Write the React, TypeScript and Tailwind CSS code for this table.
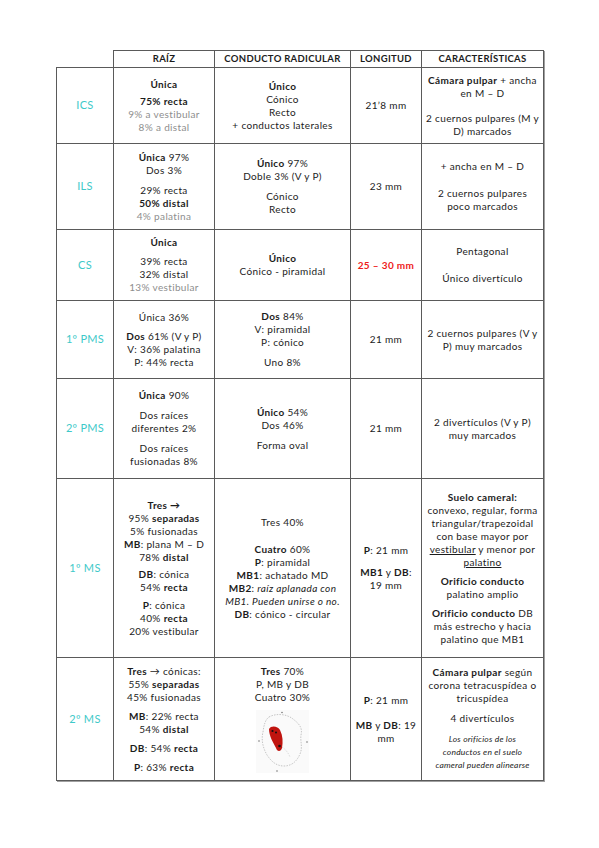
import React from "react";

const FONT = "font-['Lato','Open_Sans',sans-serif]";

const Td = ({ children }: { children?: React.ReactNode }) => (
  <td className="border border-[#5a5a5a] px-[2px] text-center align-middle">
    {children}
  </td>
);

const Label = ({ children }: { children: React.ReactNode }) => (
  <td className="border border-[#5a5a5a] text-center align-middle text-[11px] tracking-[0.3px] text-[#3ec9c9]">
    {children}
  </td>
);

const L = ({
  children,
  className = "",
}: {
  children: React.ReactNode;
  className?: string;
}) => <div className={`whitespace-nowrap leading-[13px] ${className}`}>{children}</div>;

const Gray = ({ children }: { children: React.ReactNode }) => (
  <span className="text-[#8e8e8e]">{children}</span>
);

const ToothSketch = () => (
  <svg width="53" height="63" viewBox="0 0 53 63" className="mx-auto mt-[6px] bg-[#fafafa]">
    <path
      d="M13 7 C20 3 31 4 37 9 C42 13 47 17 45 25 C44 31 47 37 44 44 C41 51 36 56 28 56 C20 56 15 51 11 45 C7 38 5 30 7 22 C8 15 9 10 13 7 Z"
      fill="none"
      stroke="#b8b8b8"
      strokeWidth="0.8"
      strokeDasharray="1.5 1.2"
    />
    <path d="M21 38 C25 34 31 40 34 47" fill="none" stroke="#c8c8c8" strokeWidth="0.6" strokeDasharray="1.5 1.2" />
    <path
      d="M13 19 C15 15 22 16 24 20 C27 26 27 32 26 38 C25 42 21 42 20 38 C17 32 13 26 13 19 Z"
      fill="#c0140f"
    />
    <circle cx="16.5" cy="21" r="1.1" fill="#111" />
    <circle cx="20" cy="22.5" r="1" fill="#111" />
    <circle cx="23.5" cy="36" r="1.3" fill="#111" />
    <circle cx="3" cy="31" r="0.8" fill="#777" />
    <circle cx="51" cy="32" r="0.8" fill="#777" />
    <circle cx="26" cy="2.5" r="0.8" fill="#777" />
    <circle cx="21" cy="61" r="0.8" fill="#777" />
  </svg>
);

const App = () => {
  return (
    <div className={`min-h-[848px] w-[599px] bg-white pl-[56px] pt-[50px] text-[10px] tracking-[0.35px] text-[#1c1c1c] ${FONT}`}>
      <table className="w-[487px] table-fixed border-collapse shadow-[1px_1px_0_0_#a0a0a0]">
        <colgroup>
          <col className="w-[57px]" />
          <col className="w-[101px]" />
          <col className="w-[136px]" />
          <col className="w-[71px]" />
          <col className="w-[122px]" />
        </colgroup>
        <thead>
          <tr className="h-[17px] text-[9.5px] font-bold tracking-[0.3px]">
            <th className="border-0 bg-white"></th>
            <th className="border border-[#5a5a5a] font-bold">RAÍZ</th>
            <th className="border border-[#5a5a5a] font-bold">CONDUCTO RADICULAR</th>
            <th className="border border-[#5a5a5a] font-bold">LONGITUD</th>
            <th className="border border-[#5a5a5a] font-bold">CARACTERÍSTICAS</th>
          </tr>
        </thead>
        <tbody>
          {/* ICS */}
          <tr className="h-[76px]">
            <Label>ICS</Label>
            <Td>
              <L className="font-bold">Única</L>
              <L className="mt-[4px] font-bold">75% recta</L>
              <L><Gray>9% a vestibular</Gray></L>
              <L><Gray>8% a distal</Gray></L>
            </Td>
            <Td>
              <L className="font-bold">Único</L>
              <L>Cónico</L>
              <L>Recto</L>
              <L>+ conductos laterales</L>
            </Td>
            <Td>21’8 mm</Td>
            <Td>
              <L><b>Cámara pulpar</b> + ancha</L>
              <L>en M – D</L>
              <L className="mt-[12px]">2 cuernos pulpares (M y</L>
              <L>D) marcados</L>
            </Td>
          </tr>

          {/* ILS */}
          <tr className="h-[86px]">
            <Label>ILS</Label>
            <Td>
              <L><b>Única</b> 97%</L>
              <L>Dos 3%</L>
              <L className="mt-[7px]">29% recta</L>
              <L className="font-bold">50% distal</L>
              <L><Gray>4% palatina</Gray></L>
            </Td>
            <Td>
              <L><b>Único</b> 97%</L>
              <L>Doble 3% (V y P)</L>
              <L className="mt-[7px]">Cónico</L>
              <L>Recto</L>
            </Td>
            <Td>23 mm</Td>
            <Td>
              <L>+ ancha en M – D</L>
              <L className="mt-[14px]">2 cuernos pulpares</L>
              <L>poco marcados</L>
            </Td>
          </tr>

          {/* CS */}
          <tr className="h-[71px]">
            <Label>CS</Label>
            <Td>
              <L className="font-bold">Única</L>
              <L className="mt-[6px]">39% recta</L>
              <L>32% distal</L>
              <L><Gray>13% vestibular</Gray></L>
            </Td>
            <Td>
              <L className="font-bold">Único</L>
              <L>Cónico - piramidal</L>
            </Td>
            <Td>
              <span className="font-bold text-[#ee1b1b]">25 – 30 mm</span>
            </Td>
            <Td>
              <L>Pentagonal</L>
              <L className="mt-[14px]">Único divertículo</L>
            </Td>
          </tr>

          {/* 1º PMS */}
          <tr className="h-[78px]">
            <Label>1º PMS</Label>
            <Td>
              <L>Única 36%</L>
              <L className="mt-[6px]"><b>Dos</b> 61% (V y P)</L>
              <L>V: 36% palatina</L>
              <L>P: 44% recta</L>
            </Td>
            <Td>
              <L><b>Dos</b> 84%</L>
              <L>V: piramidal</L>
              <L>P: cónico</L>
              <L className="mt-[7px]">Uno 8%</L>
            </Td>
            <Td>21 mm</Td>
            <Td>
              <L>2 cuernos pulpares (V y</L>
              <L>P) muy marcados</L>
            </Td>
          </tr>

          {/* 2º PMS */}
          <tr className="h-[100px]">
            <Label>2º PMS</Label>
            <Td>
              <L><b>Única</b> 90%</L>
              <L className="mt-[7px]">Dos raíces</L>
              <L>diferentes 2%</L>
              <L className="mt-[7px]">Dos raíces</L>
              <L>fusionadas 8%</L>
            </Td>
            <Td>
              <L><b>Único</b> 54%</L>
              <L>Dos 46%</L>
              <L className="mt-[7px]">Forma oval</L>
            </Td>
            <Td>21 mm</Td>
            <Td>
              <L>2 divertículos (V y P)</L>
              <L>muy marcados</L>
            </Td>
          </tr>

          {/* 1º MS */}
          <tr className="h-[179px]">
            <Label>1º MS</Label>
            <Td>
              <L className="font-bold">Tres →</L>
              <L>95% <b>separadas</b></L>
              <L>5% fusionadas</L>
              <L><b>MB</b>: plana M – D</L>
              <L>78% <b>distal</b></L>
              <L className="mt-[4px]"><b>DB</b>: cónica</L>
              <L>54% <b>recta</b></L>
              <L className="mt-[5px]"><b>P</b>: cónica</L>
              <L>40% <b>recta</b></L>
              <L>20% vestibular</L>
            </Td>
            <Td>
              <L>Tres 40%</L>
              <L className="mt-[14px]"><b>Cuatro</b> 60%</L>
              <L><b>P</b>: piramidal</L>
              <L><b>MB1</b>: achatado MD</L>
              <L><b>MB2</b>: <i>raíz aplanada con</i></L>
              <L><i>MB1. Pueden unirse o no.</i></L>
              <L><b>DB</b>: cónico - circular</L>
            </Td>
            <Td>
              <L><b>P</b>: 21 mm</L>
              <L className="mt-[9px]"><b>MB1</b> y <b>DB</b>:</L>
              <L>19 mm</L>
            </Td>
            <Td>
              <L className="font-bold">Suelo cameral:</L>
              <L>convexo, regular, forma</L>
              <L>triangular/trapezoidal</L>
              <L>con base mayor por</L>
              <L><u>vestibular</u> y menor por</L>
              <L><u>palatino</u></L>
              <L className="mt-[6px] font-bold">Orificio conducto</L>
              <L>palatino amplio</L>
              <L className="mt-[6px]"><b>Orificio conducto</b> DB</L>
              <L>más estrecho y hacia</L>
              <L>palatino que MB1</L>
            </Td>
          </tr>

          {/* 2º MS */}
          <tr className="h-[123px]">
            <Label>2º MS</Label>
            <Td>
              <L><b>Tres</b> → cónicas:</L>
              <L>55% <b>separadas</b></L>
              <L>45% fusionadas</L>
              <L className="mt-[6px]"><b>MB</b>: 22% recta</L>
              <L>54% <b>distal</b></L>
              <L className="mt-[6px]"><b>DB</b>: 54% <b>recta</b></L>
              <L className="mt-[6px]"><b>P</b>: 63% <b>recta</b></L>
            </Td>
            <Td>
              <L><b>Tres</b> 70%</L>
              <L>P, MB y DB</L>
              <L>Cuatro 30%</L>
              <ToothSketch />
            </Td>
            <Td>
              <L><b>P</b>: 21 mm</L>
              <L className="mt-[12px]"><b>MB</b> y <b>DB</b>: 19</L>
              <L>mm</L>
            </Td>
            <Td>
              <L><b>Cámara pulpar</b> según</L>
              <L>corona tetracuspídea o</L>
              <L>tricuspídea</L>
              <L className="mt-[7px]">4 divertículos</L>
              <div className="mt-[8px] text-[8.5px] italic tracking-[0.2px]">
                <L>Los orificios de los</L>
                <L>conductos en el suelo</L>
                <L>cameral pueden alinearse</L>
              </div>
            </Td>
          </tr>
        </tbody>
      </table>
    </div>
  );
};

export default App;
